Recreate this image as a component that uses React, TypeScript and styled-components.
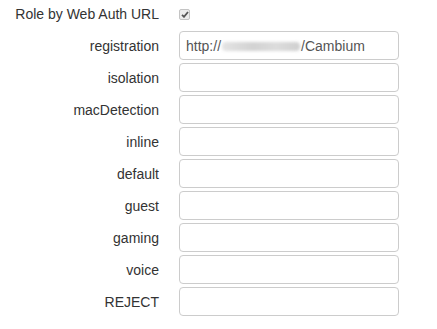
import React from 'react';
import styled, { createGlobalStyle } from 'styled-components';

const GlobalStyle = createGlobalStyle`
  body {
    margin: 0;
    background: #fff;
    font-family: "Liberation Sans", Arial, sans-serif;
    font-size: 14px;
    color: #333;
  }
`;

const Form = styled.div`
  display: grid;
  grid-template-columns: 159px 220px;
  column-gap: 20px;
  row-gap: 3px;
  align-items: center;
`;

const Label = styled.div<{ $tall?: boolean }>`
  text-align: right;
  height: ${(p) => (p.$tall ? '28px' : '29px')};
  box-sizing: border-box;
  line-height: ${(p) => (p.$tall ? '27px' : '28px')};
  padding-top: 1px;
  white-space: nowrap;
`;

const CheckCell = styled.div`
  height: 28px;
  display: flex;
  align-items: center;
`;

const CheckBox = styled.span`
  width: 11px;
  height: 11px;
  box-sizing: border-box;
  border: 1px solid #c4c4c4;
  border-radius: 2px;
  background: #ececec;
  display: flex;
  align-items: center;
  justify-content: center;
`;

const Field = styled.div`
  height: 29px;
  box-sizing: border-box;
  border: 1px solid #ccc;
  border-radius: 4px;
  padding: 1px 6px 0;
  display: flex;
  align-items: center;
  background: #fff;
  color: #555;
  white-space: nowrap;
  overflow: hidden;
`;

const Smudge = styled.span`
  display: inline-block;
  width: 78px;
  height: 9px;
  margin: 0 1px;
  border-radius: 4px;
  background: linear-gradient(90deg, #e4e4e4, #d2d2d2 40%, #dcdcdc 70%, #cfcfcf);
  filter: blur(1.5px);
`;

const roles = ['isolation', 'macDetection', 'inline', 'default', 'guest', 'gaming', 'voice', 'REJECT'];

export default function App() {
  return (
    <>
      <GlobalStyle />
      <Form>
        <Label $tall>Role by Web Auth URL</Label>
        <CheckCell>
          <CheckBox>
            <svg width="8" height="7" viewBox="0 0 8 7">
              <path d="M1 3.8 L3 5.8 L7 1" fill="none" stroke="#555" strokeWidth="1.8" />
            </svg>
          </CheckBox>
        </CheckCell>
        <Label>registration</Label>
        <Field>
          <span>http://</span>
          <Smudge />
          <span>/Cambium</span>
        </Field>
        {roles.map((r) => (
          <React.Fragment key={r}>
            <Label>{r}</Label>
            <Field />
          </React.Fragment>
        ))}
      </Form>
    </>
  );
}
